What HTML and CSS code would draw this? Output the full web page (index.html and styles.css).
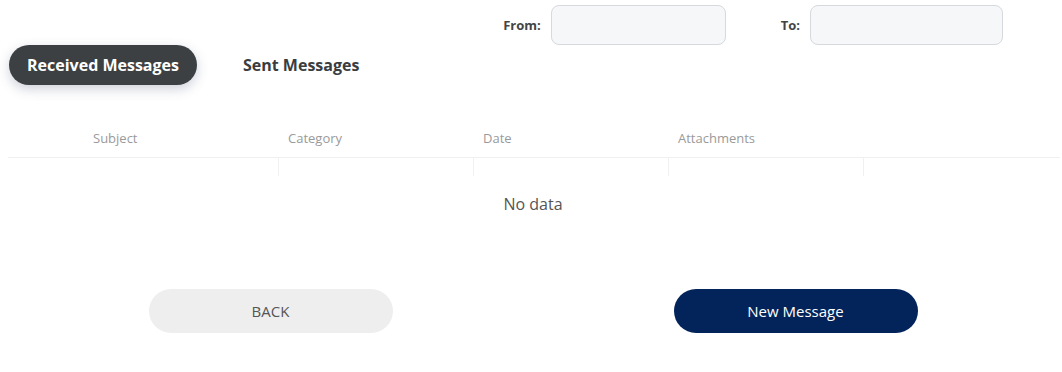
FILE: index.html
```html
<!DOCTYPE html>
<html lang="en">
<head>
    <meta charset="UTF-8">
    <meta name="viewport" content="width=device-width, initial-scale=1.0">
    <title>Messages</title>
    <link rel="stylesheet" href="styles.css">
</head>
<body>
    <div class="container">
        <div class="filters">
            <label class="filter-label" for="from-date">From:</label>
            <input class="filter-input from" id="from-date" type="text">
            <label class="filter-label to-label" for="to-date">To:</label>
            <input class="filter-input to" id="to-date" type="text">
        </div>

        <div class="tabs">
            <button class="tab active">Received Messages</button>
            <button class="tab">Sent Messages</button>
        </div>

        <table class="messages">
            <colgroup>
                <col class="col-expand">
                <col class="col-wide">
                <col class="col-wide">
                <col class="col-wide">
                <col class="col-wide">
                <col>
            </colgroup>
            <thead>
                <tr>
                    <th></th>
                    <th>Subject</th>
                    <th>Category</th>
                    <th>Date</th>
                    <th>Attachments</th>
                    <th></th>
                </tr>
            </thead>
            <tbody>
                <tr class="spacer-row">
                    <td></td>
                    <td></td>
                    <td class="divided"></td>
                    <td class="divided"></td>
                    <td class="divided"></td>
                    <td class="divided"></td>
                </tr>
            </tbody>
        </table>
        <div class="empty">No data</div>

        <div class="actions">
            <div class="action-cell">
                <button class="btn btn-back">BACK</button>
            </div>
            <div class="action-cell">
                <button class="btn btn-primary">New Message</button>
            </div>
        </div>
    </div>
</body>
</html>
```

FILE: styles.css
```css
* {
    margin: 0;
    padding: 0;
    box-sizing: border-box;
    font-family: 'Open Sans', 'Liberation Sans', sans-serif;
}

body {
    background: #fff;
    color: #333;
}

.container {
    width: 1062px;
    height: 372px;
}

.filters {
    display: flex;
    align-items: center;
    justify-content: flex-end;
    padding: 5px 59px 0 0;
    height: 45px;
}

.filter-label {
    font-size: 13px;
    font-weight: 700;
    color: #444;
    margin-right: 10px;
}

.to-label {
    margin-left: 55px;
}

.filter-input {
    height: 40px;
    background: #f5f7f9;
    border: 1px solid #d6d9dd;
    border-radius: 8px;
    outline: none;
}

.filter-input.from {
    width: 175px;
}

.filter-input.to {
    width: 193px;
}

.tabs {
    display: flex;
    gap: 28px;
    padding-left: 9px;
}

.tab {
    height: 40px;
    padding: 0 18px;
    border: none;
    border-radius: 20px;
    background: transparent;
    font-size: 16px;
    font-weight: 700;
    color: #3a3d40;
    cursor: pointer;
}

.tab.active {
    background: #3d4042;
    color: #fff;
    box-shadow: 0 4px 12px rgba(60, 70, 110, 0.25);
}

.messages {
    width: 1052px;
    margin: 33px 0 0 8px;
    border-collapse: collapse;
    table-layout: fixed;
}

.col-expand {
    width: 75px;
}

.col-wide {
    width: 195px;
}

.messages th {
    height: 39px;
    padding: 2px 10px 0;
    text-align: left;
    font-size: 13px;
    font-weight: 400;
    color: #9a9a9a;
    border-bottom: 1px solid #eef0f2;
}

.spacer-row td {
    height: 19px;
}

.spacer-row td.divided {
    border-left: 1px solid #eef0f2;
}

.empty {
    text-align: center;
    font-size: 16px;
    color: #555;
    padding-left: 4px;
    margin-top: 17px;
}

.actions {
    display: grid;
    grid-template-columns: 525px 525px;
    padding-left: 8px;
    margin-top: 74px;
}

.action-cell {
    display: flex;
    justify-content: center;
}

.btn {
    width: 244px;
    height: 44px;
    border: none;
    border-radius: 22px;
    font-size: 15px;
    cursor: pointer;
}

.btn-back {
    background: #eeeeee;
    color: #555;
}

.btn-primary {
    background: #02245a;
    color: #fff;
}
```
